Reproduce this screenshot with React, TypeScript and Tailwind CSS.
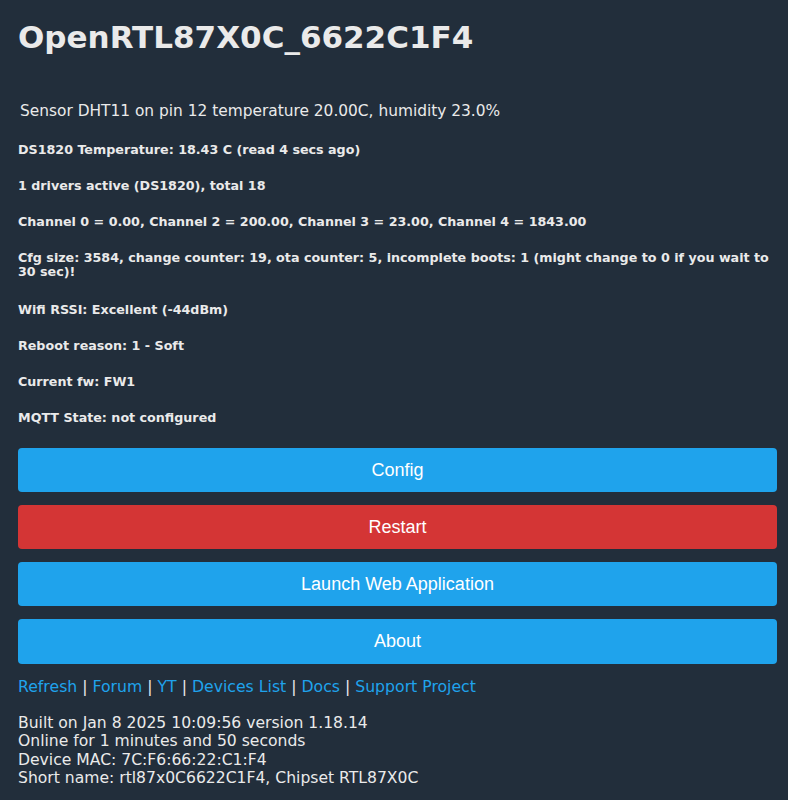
import React from "react";

const lines: string[] = [
  "DS1820 Temperature: 18.43 C (read 4 secs ago)",
  "1 drivers active (DS1820), total 18",
  "Channel 0 = 0.00, Channel 2 = 200.00, Channel 3 = 23.00, Channel 4 = 1843.00",
  "Cfg size: 3584, change counter: 19, ota counter: 5, incomplete boots: 1 (might change to 0 if you wait to 30 sec)!",
  "Wifi RSSI: Excellent (-44dBm)",
  "Reboot reason: 1 - Soft",
  "Current fw: FW1",
  "MQTT State: not configured",
];

const links = ["Refresh", "Forum", "YT", "Devices List", "Docs", "Support Project"];

export default function App() {
  return (
    <div
      className="min-h-[800px] bg-[#222e3b] pl-[18px] pr-[11px] pt-[17px] text-[#eaeaea]"
      style={{ fontFamily: '"DejaVu Sans", Verdana, sans-serif' }}
    >
      <h1 className="text-[31px] font-bold leading-[40px]">OpenRTL87X0C_6622C1F4</h1>
      <div className="mt-[44px] pl-[2px] text-[15.4px] leading-[20px]">
        Sensor DHT11 on pin 12 temperature 20.00C, humidity 23.0%
      </div>
      <div className="mt-[22px] flex flex-col gap-[22px]">
        {lines.map((l, i) => (
          <div key={i} className={`text-[12.7px] font-bold leading-[14px] ${i === 3 ? "mb-[2px]" : ""}`}>
            {l}
          </div>
        ))}
      </div>
      <div className="mt-[23px] flex flex-col gap-[13px]" style={{ fontFamily: '"Liberation Sans", Arial, sans-serif' }}>
        <div className="flex h-[44px] items-center justify-center rounded-[4px] bg-[#1fa3ec] text-[18px] text-white">Config</div>
        <div className="flex h-[44px] items-center justify-center rounded-[4px] bg-[#d43535] text-[18px] text-white">Restart</div>
        <div className="flex h-[44px] items-center justify-center rounded-[4px] bg-[#1fa3ec] text-[18px] text-white">Launch Web Application</div>
        <div className="flex h-[45px] items-center justify-center rounded-[4px] bg-[#1fa3ec] text-[18px] text-white">About</div>
      </div>
      <div className="mt-[13px] text-[15.7px] leading-[20px]">
        {links.map((l, i) => (
          <React.Fragment key={l}>
            {i > 0 && <span className="text-[#eaeaea]"> | </span>}
            <a className="text-[#1fa3ec]">{l}</a>
          </React.Fragment>
        ))}
      </div>
      <div className="mt-[17px] text-[15.6px] leading-[18.4px]">
        <div>Built on Jan 8 2025 10:09:56 version 1.18.14</div>
        <div>Online for 1 minutes and 50 seconds</div>
        <div>Device MAC: 7C:F6:66:22:C1:F4</div>
        <div>Short name: rtl87x0C6622C1F4, Chipset RTL87X0C</div>
      </div>
    </div>
  );
}
